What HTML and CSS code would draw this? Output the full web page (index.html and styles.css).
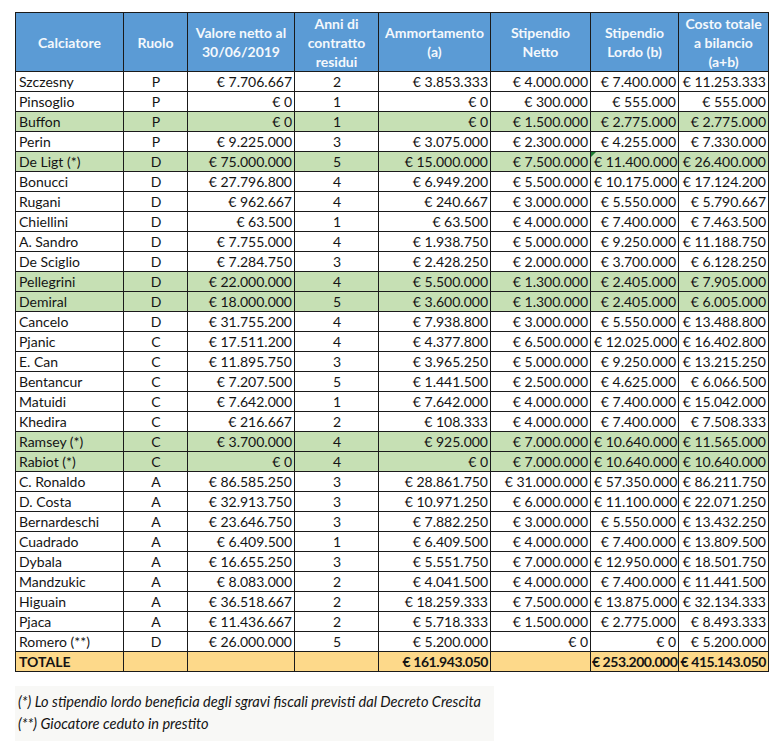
FILE: index.html
```html
<!DOCTYPE html>
<html lang="it">
<head>
<meta charset="utf-8">
<title>Juventus - costi rosa</title>
<link rel="stylesheet" href="styles.css">
</head>
<body>
<div class="page">
<table class="sheet">
<colgroup>
<col class="c1"><col class="c2"><col class="c3"><col class="c4"><col class="c5"><col class="c6"><col class="c7"><col class="c8">
</colgroup>
<thead>
<tr>
<th>Calciatore</th><th>Ruolo</th><th>Valore netto al 30/06/2019</th><th>Anni di contratto residui</th><th>Ammortamento (a)</th><th>Stipendio Netto</th><th>Stipendio Lordo (b)</th><th>Costo totale a bilancio (a+b)</th>
</tr>
</thead>
<tbody>
<tr><td class="name">Szczesny</td><td class="mid">P</td><td class="num">€ 7.706.667</td><td class="mid">2</td><td class="num">€ 3.853.333</td><td class="num">€ 4.000.000</td><td class="num">€ 7.400.000</td><td class="num">€ 11.253.333</td></tr>
<tr><td class="name">Pinsoglio</td><td class="mid">P</td><td class="num">€ 0</td><td class="mid">1</td><td class="num">€ 0</td><td class="num">€ 300.000</td><td class="num">€ 555.000</td><td class="num">€ 555.000</td></tr>
<tr class="new"><td class="name">Buffon</td><td class="mid">P</td><td class="num">€ 0</td><td class="mid">1</td><td class="num">€ 0</td><td class="num">€ 1.500.000</td><td class="num">€ 2.775.000</td><td class="num">€ 2.775.000</td></tr>
<tr><td class="name">Perin</td><td class="mid">P</td><td class="num">€ 9.225.000</td><td class="mid">3</td><td class="num">€ 3.075.000</td><td class="num">€ 2.300.000</td><td class="num">€ 4.255.000</td><td class="num">€ 7.330.000</td></tr>
<tr class="new"><td class="name">De Ligt (*)</td><td class="mid">D</td><td class="num">€ 75.000.000</td><td class="mid">5</td><td class="num">€ 15.000.000</td><td class="num">€ 7.500.000</td><td class="num flag">€ 11.400.000</td><td class="num">€ 26.400.000</td></tr>
<tr><td class="name">Bonucci</td><td class="mid">D</td><td class="num">€ 27.796.800</td><td class="mid">4</td><td class="num">€ 6.949.200</td><td class="num">€ 5.500.000</td><td class="num">€ 10.175.000</td><td class="num">€ 17.124.200</td></tr>
<tr><td class="name">Rugani</td><td class="mid">D</td><td class="num">€ 962.667</td><td class="mid">4</td><td class="num">€ 240.667</td><td class="num">€ 3.000.000</td><td class="num">€ 5.550.000</td><td class="num">€ 5.790.667</td></tr>
<tr><td class="name">Chiellini</td><td class="mid">D</td><td class="num">€ 63.500</td><td class="mid">1</td><td class="num">€ 63.500</td><td class="num">€ 4.000.000</td><td class="num">€ 7.400.000</td><td class="num">€ 7.463.500</td></tr>
<tr><td class="name">A. Sandro</td><td class="mid">D</td><td class="num">€ 7.755.000</td><td class="mid">4</td><td class="num">€ 1.938.750</td><td class="num">€ 5.000.000</td><td class="num">€ 9.250.000</td><td class="num">€ 11.188.750</td></tr>
<tr><td class="name">De Sciglio</td><td class="mid">D</td><td class="num">€ 7.284.750</td><td class="mid">3</td><td class="num">€ 2.428.250</td><td class="num">€ 2.000.000</td><td class="num">€ 3.700.000</td><td class="num">€ 6.128.250</td></tr>
<tr class="new"><td class="name">Pellegrini</td><td class="mid">D</td><td class="num">€ 22.000.000</td><td class="mid">4</td><td class="num">€ 5.500.000</td><td class="num">€ 1.300.000</td><td class="num">€ 2.405.000</td><td class="num">€ 7.905.000</td></tr>
<tr class="new"><td class="name">Demiral</td><td class="mid">D</td><td class="num">€ 18.000.000</td><td class="mid">5</td><td class="num">€ 3.600.000</td><td class="num">€ 1.300.000</td><td class="num">€ 2.405.000</td><td class="num">€ 6.005.000</td></tr>
<tr><td class="name">Cancelo</td><td class="mid">D</td><td class="num">€ 31.755.200</td><td class="mid">4</td><td class="num">€ 7.938.800</td><td class="num">€ 3.000.000</td><td class="num">€ 5.550.000</td><td class="num">€ 13.488.800</td></tr>
<tr><td class="name">Pjanic</td><td class="mid">C</td><td class="num">€ 17.511.200</td><td class="mid">4</td><td class="num">€ 4.377.800</td><td class="num">€ 6.500.000</td><td class="num">€ 12.025.000</td><td class="num">€ 16.402.800</td></tr>
<tr><td class="name">E. Can</td><td class="mid">C</td><td class="num">€ 11.895.750</td><td class="mid">3</td><td class="num">€ 3.965.250</td><td class="num">€ 5.000.000</td><td class="num">€ 9.250.000</td><td class="num">€ 13.215.250</td></tr>
<tr><td class="name">Bentancur</td><td class="mid">C</td><td class="num">€ 7.207.500</td><td class="mid">5</td><td class="num">€ 1.441.500</td><td class="num">€ 2.500.000</td><td class="num">€ 4.625.000</td><td class="num">€ 6.066.500</td></tr>
<tr><td class="name">Matuidi</td><td class="mid">C</td><td class="num">€ 7.642.000</td><td class="mid">1</td><td class="num">€ 7.642.000</td><td class="num">€ 4.000.000</td><td class="num">€ 7.400.000</td><td class="num">€ 15.042.000</td></tr>
<tr><td class="name">Khedira</td><td class="mid">C</td><td class="num">€ 216.667</td><td class="mid">2</td><td class="num">€ 108.333</td><td class="num">€ 4.000.000</td><td class="num">€ 7.400.000</td><td class="num">€ 7.508.333</td></tr>
<tr class="new"><td class="name">Ramsey (*)</td><td class="mid">C</td><td class="num">€ 3.700.000</td><td class="mid">4</td><td class="num">€ 925.000</td><td class="num">€ 7.000.000</td><td class="num">€ 10.640.000</td><td class="num">€ 11.565.000</td></tr>
<tr class="new"><td class="name">Rabiot (*)</td><td class="mid">C</td><td class="num">€ 0</td><td class="mid">4</td><td class="num">€ 0</td><td class="num">€ 7.000.000</td><td class="num">€ 10.640.000</td><td class="num">€ 10.640.000</td></tr>
<tr><td class="name">C. Ronaldo</td><td class="mid">A</td><td class="num">€ 86.585.250</td><td class="mid">3</td><td class="num">€ 28.861.750</td><td class="num">€ 31.000.000</td><td class="num">€ 57.350.000</td><td class="num">€ 86.211.750</td></tr>
<tr><td class="name">D. Costa</td><td class="mid">A</td><td class="num">€ 32.913.750</td><td class="mid">3</td><td class="num">€ 10.971.250</td><td class="num">€ 6.000.000</td><td class="num">€ 11.100.000</td><td class="num">€ 22.071.250</td></tr>
<tr><td class="name">Bernardeschi</td><td class="mid">A</td><td class="num">€ 23.646.750</td><td class="mid">3</td><td class="num">€ 7.882.250</td><td class="num">€ 3.000.000</td><td class="num">€ 5.550.000</td><td class="num">€ 13.432.250</td></tr>
<tr><td class="name">Cuadrado</td><td class="mid">A</td><td class="num">€ 6.409.500</td><td class="mid">1</td><td class="num">€ 6.409.500</td><td class="num">€ 4.000.000</td><td class="num">€ 7.400.000</td><td class="num">€ 13.809.500</td></tr>
<tr><td class="name">Dybala</td><td class="mid">A</td><td class="num">€ 16.655.250</td><td class="mid">3</td><td class="num">€ 5.551.750</td><td class="num">€ 7.000.000</td><td class="num">€ 12.950.000</td><td class="num">€ 18.501.750</td></tr>
<tr><td class="name">Mandzukic</td><td class="mid">A</td><td class="num">€ 8.083.000</td><td class="mid">2</td><td class="num">€ 4.041.500</td><td class="num">€ 4.000.000</td><td class="num">€ 7.400.000</td><td class="num">€ 11.441.500</td></tr>
<tr><td class="name">Higuain</td><td class="mid">A</td><td class="num">€ 36.518.667</td><td class="mid">2</td><td class="num">€ 18.259.333</td><td class="num">€ 7.500.000</td><td class="num">€ 13.875.000</td><td class="num">€ 32.134.333</td></tr>
<tr><td class="name">Pjaca</td><td class="mid">A</td><td class="num">€ 11.436.667</td><td class="mid">2</td><td class="num">€ 5.718.333</td><td class="num">€ 1.500.000</td><td class="num">€ 2.775.000</td><td class="num">€ 8.493.333</td></tr>
<tr><td class="name">Romero (**)</td><td class="mid">D</td><td class="num">€ 26.000.000</td><td class="mid">5</td><td class="num">€ 5.200.000</td><td class="num">€ 0</td><td class="num">€ 0</td><td class="num">€ 5.200.000</td></tr>
<tr class="total"><td class="name">TOTALE</td><td></td><td></td><td></td><td class="num">€ 161.943.050</td><td></td><td class="num">€ 253.200.000</td><td class="num">€ 415.143.050</td></tr>
</tbody>
</table>
<div class="notes">
<p>(*) Lo stipendio lordo beneficia degli sgravi fiscali previsti dal Decreto Crescita</p>
<p>(**) Giocatore ceduto in prestito</p>
</div>
</div>
</body>
</html>
```
FILE: styles.css
```css
html, body {
  margin: 0;
  padding: 0;
  background: #ffffff;
}
.page {
  padding: 12px 0 0 15px;
  font-family: Lato, "Open Sans", "Liberation Sans", sans-serif;
  color: #141414;
}
.sheet {
  border-collapse: collapse;
  table-layout: fixed;
  width: 753px;
  font-size: 14px;
}
.c1 { width: 108px; }
.c2 { width: 64px; }
.c3 { width: 107px; }
.c4 { width: 84px; }
.c5 { width: 112px; }
.c6 { width: 100px; }
.c7 { width: 88px; }
.c8 { width: 90px; }
.sheet th {
  background: #5b9bd5;
  color: #f4f8fc;
  font-weight: 700;
  font-size: 14px;
  line-height: 19px;
  height: 58px;
  padding: 0 3px;
  border: 1px solid #1a1a1a;
  text-align: center;
  vertical-align: middle;
}
.sheet td {
  height: 19px;
  line-height: 19px;
  padding: 0 2px 0 3px;
  border: 1px solid #1a1a1a;
  white-space: nowrap;
  overflow: hidden;
}
.sheet td.mid { text-align: center; }
.sheet td.num { text-align: right; }
.sheet tr.new td { background: #c6e0b4; }
.sheet tr.total td {
  background: #fdd98a;
  font-weight: 700;
  letter-spacing: -0.45px;
  padding-left: 1px;
  padding-right: 2px;
}
.sheet tr.total td.name {
  letter-spacing: 0;
  padding-left: 3px;
}
.sheet td.flag { position: relative; }
.sheet td.flag::before {
  content: "";
  position: absolute;
  left: 0;
  top: 0;
  border-top: 5px solid #1e7d32;
  border-right: 5px solid transparent;
}
.notes {
  margin-top: 14px;
  width: 476px;
  padding: 5px 0 6px 3px;
  background: #f8f8f6;
  font-style: italic;
  font-size: 14.6px;
  line-height: 22px;
}
.notes p {
  margin: 0;
}
```
